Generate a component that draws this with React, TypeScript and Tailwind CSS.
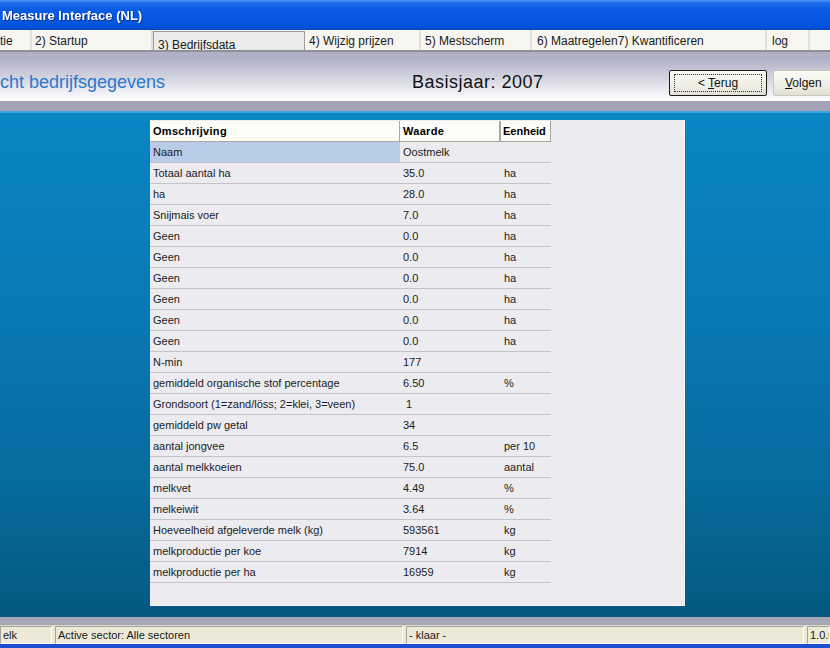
import React from 'react';

type Row = { label: string; value: string; unit: string };

const ROWS: Row[] = [
  { label: 'Naam', value: 'Oostmelk', unit: '' },
  { label: 'Totaal aantal ha', value: '35.0', unit: 'ha' },
  { label: 'ha', value: '28.0', unit: 'ha' },
  { label: 'Snijmais voer', value: '7.0', unit: 'ha' },
  { label: 'Geen', value: '0.0', unit: 'ha' },
  { label: 'Geen', value: '0.0', unit: 'ha' },
  { label: 'Geen', value: '0.0', unit: 'ha' },
  { label: 'Geen', value: '0.0', unit: 'ha' },
  { label: 'Geen', value: '0.0', unit: 'ha' },
  { label: 'Geen', value: '0.0', unit: 'ha' },
  { label: 'N-min', value: '177', unit: '' },
  { label: 'gemiddeld organische stof percentage', value: '6.50', unit: '%' },
  { label: 'Grondsoort (1=zand/löss; 2=klei, 3=veen)', value: '\u00a01', unit: '' },
  { label: 'gemiddeld pw getal', value: '34', unit: '' },
  { label: 'aantal jongvee', value: '6.5', unit: 'per 10' },
  { label: 'aantal melkkoeien', value: '75.0', unit: 'aantal' },
  { label: 'melkvet', value: '4.49', unit: '%' },
  { label: 'melkeiwit', value: '3.64', unit: '%' },
  { label: 'Hoeveelheid afgeleverde melk (kg)', value: '593561', unit: 'kg' },
  { label: 'melkproductie per koe', value: '7914', unit: 'kg' },
  { label: 'melkproductie per ha', value: '16959', unit: 'kg' },
];

const TABS = [
  { label: 'tie', w: 'w-[32px]', pl: 'pl-0' },
  { label: '2) Startup', w: 'w-[121px]', pl: 'pl-[3px]' },
  { label: '3) Bedrijfsdata', w: 'w-[152px]', pl: 'pl-[4px]', active: true },
  { label: '4) Wijzig prijzen', w: 'w-[116px]', pl: 'pl-[4px]' },
  { label: '5) Mestscherm', w: 'w-[111px]', pl: 'pl-[4px]' },
  { label: '6) Maatregelen7) Kwantificeren', w: 'w-[235px]', pl: 'pl-[5px]' },
  { label: 'log', w: 'w-[43px]', pl: 'pl-[5px]' },
];

function TabBar() {
  return (
    <div className="flex h-[20px] bg-[#f6f5f0] text-[12px] text-[#1a1a1a]">
      {TABS.map((t, i) =>
        t.active ? (
          <div
            key={i}
            className={`${t.w} ${t.pl} h-[21px] mt-[1px] flex items-end pb-[1px] bg-[#ececec] border border-b-0 border-[#9c9c9c] leading-none`}
          >
            {t.label}
          </div>
        ) : (
          <div
            key={i}
            className={`${t.w} ${t.pl} h-full flex items-center pt-[1px] border-r-2 border-[#e0dfd8] leading-none`}
          >
            {t.label}
          </div>
        )
      )}
    </div>
  );
}

function XpButton({ children, focused }: { children: React.ReactNode; focused?: boolean }) {
  return (
    <div
      className={`w-[98px] h-[26px] shrink-0 rounded-[2px] bg-[linear-gradient(180deg,#fbfaf4_0%,#f0efe6_60%,#e2e0d4_100%)] text-[12px] text-[#111] flex items-center ${
        focused ? 'border border-[#1a1a1a] justify-center' : 'border border-[#c9c7ba] pl-[11px]'
      }`}
    >
      {focused ? (
        <div className="w-[88px] h-[18px] border border-dotted border-[#333] flex items-center justify-center leading-none">
          <span>{children}</span>
        </div>
      ) : (
        <span className="leading-none">{children}</span>
      )}
    </div>
  );
}

function StatusCell({ w, children, grow }: { w?: string; children: React.ReactNode; grow?: boolean }) {
  return (
    <div
      className={`${w ?? ''} ${grow ? 'flex-1 min-w-0' : 'shrink-0'} h-full flex items-center pl-[2px] border-t border-l border-[#a7a594] border-b border-r border-b-white border-r-white whitespace-nowrap overflow-hidden`}
    >
      {children}
    </div>
  );
}

export default function App() {
  return (
    <div className="w-[830px] h-[648px] overflow-hidden flex flex-col font-['Liberation_Sans',Arial,sans-serif]">
      {/* title bar */}
      <div className="h-[30px] shrink-0 flex items-center pl-[2px] pt-[1px] bg-[linear-gradient(180deg,#4d94f5_0%,#1d6cec_10%,#0a5ce4_30%,#0556e0_70%,#0450d8_92%,#0a44b8_100%)]">
        <span className="text-white font-bold text-[13px] drop-shadow-[1px_1px_0_#0a2f8a]">
          Measure Interface (NL)
        </span>
      </div>

      <TabBar />

      <div className="h-[2px] shrink-0 bg-[#8f8f96]" />

      {/* header band */}
      <div className="h-[49px] shrink-0 flex items-start pt-[18px] bg-[linear-gradient(180deg,#aeaec4_0%,#b6b6ca_20%,#d6d6e2_55%,#f4f4f8_88%,#ffffff_100%)] overflow-hidden">
        <div className="w-[412px] shrink-0 text-[18px] text-[#2a78cc] leading-none pt-[3px]">
          cht bedrijfsgegevens
        </div>
        <div className="w-[257px] shrink-0 text-[18px] tracking-[0.5px] text-[#111] leading-none pt-[3px]">
          Basisjaar: 2007
        </div>
        <XpButton focused>
          &lt; <span className="underline">T</span>erug
        </XpButton>
        <div className="w-[6px] shrink-0" />
        <XpButton>
          <span className="underline">V</span>olgen
        </XpButton>
      </div>
      <div className="h-[10px] shrink-0 bg-[#a3a3b7]" />
      <div className="h-[2px] shrink-0 bg-[#3aa4dc]" />

      {/* body */}
      <div className="flex-1 bg-[linear-gradient(180deg,#0a84c4_0%,#0879b4_40%,#066a9c_75%,#05587f_100%)] pt-[7px] pl-[150px]">
        <div className="w-[535px] h-[486px] bg-[#ebebf0] border-r border-b border-[#f6f6fa] pt-[1px] text-[11px] text-[#1c1c1c]">
          <div className="w-[401px]">
            <div className="flex h-[21px] font-bold text-black">
              <div className="w-[250px] flex items-center pl-[3px] tracking-[0.3px] bg-[#fcfcf8] border-r border-b border-[#a8a8a0]">
                Omschrijving
              </div>
              <div className="w-[100px] flex items-center pl-[3px] tracking-[0.3px] bg-[#fcfcf8] border-r border-b border-[#a8a8a0]">
                Waarde
              </div>
              <div className="w-[51px] flex items-center pl-[2px] bg-[#fcfcf8] border border-t-0 border-[#a8a8a0]">
                Eenheid
              </div>
            </div>
            {ROWS.map((r, i) => (
              <div key={i} className="flex h-[21px] border-b border-[#c3c3c9]">
                <div className={`w-[250px] flex items-center pl-[3px] ${i === 0 ? 'bg-[#b8cbe8]' : ''}`}>
                  {r.label}
                </div>
                <div className="w-[100px] flex items-center pl-[3px] whitespace-pre">{r.value}</div>
                <div className="w-[51px] flex items-center pl-[4px] whitespace-nowrap">{r.unit}</div>
              </div>
            ))}
          </div>
        </div>
      </div>

      {/* status area */}
      <div className="h-[8px] shrink-0 bg-[#a6a6b6]" />
      <div className="h-[1px] shrink-0 bg-[#dcdbd2]" />
      <div className="h-[18px] shrink-0 bg-[#ece9d8] flex gap-[3px] text-[11px] text-[#1a1a1a]">
        <StatusCell w="w-[52px]">elk</StatusCell>
        <StatusCell w="w-[348px]">Active sector: Alle sectoren</StatusCell>
        <StatusCell w="w-[398px]">- klaar -</StatusCell>
        <StatusCell grow>1.0.0</StatusCell>
      </div>
      <div className="h-[4px] shrink-0 bg-[#1c4ed0]" />
    </div>
  );
}
